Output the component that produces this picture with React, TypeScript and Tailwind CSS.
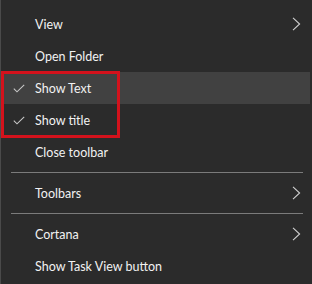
import React, { FC } from "react";

type Item = {
  label: string;
  checked?: boolean;
  submenu?: boolean;
  active?: boolean;
  separatorAfter?: boolean;
};

const items: Item[] = [
  { label: "View", submenu: true },
  { label: "Open Folder" },
  { label: "Show Text", checked: true, active: true },
  { label: "Show title", checked: true },
  { label: "Close toolbar", separatorAfter: true },
  { label: "Toolbars", submenu: true, separatorAfter: true },
  { label: "Cortana", submenu: true },
  { label: "Show Task View button" },
];

const Check: FC = () => (
  <svg width="12" height="9" viewBox="0 0 12 9" fill="none">
    <path d="M0.8 4.6 L4 7.8 L11.2 0.8" stroke="#c8c8c8" strokeWidth="1.1" />
  </svg>
);

const Chevron: FC = () => (
  <svg width="9" height="14" viewBox="0 0 9 14" fill="none">
    <path d="M1 0.8 L7.6 7 L1 13.2" stroke="#d0d0d0" strokeWidth="1.1" />
  </svg>
);

const App: FC = () => {
  return (
    <div
      className="relative w-[312px] h-[284px] overflow-hidden bg-[#2b2b2b] border-l border-[#4a4a4a] pt-2 text-[12.5px] text-[#f2f2f2]"
      style={{ fontFamily: 'Lato, "Noto Sans", sans-serif' }}
    >
      <ul>
        {items.map((item) => (
          <li key={item.label}>
            <div
              className={`flex h-8 items-center pr-[9px] mr-[2px] ${item.active ? "bg-[#414141]" : ""}`}
            >
              <div className="flex w-[34px] justify-center pl-[1px]">
                {item.checked && <Check />}
              </div>
              <span className="flex-1 pt-[2px] leading-none">{item.label}</span>
              {item.submenu && <Chevron />}
            </div>
            {item.separatorAfter && (
              <div className="my-[4px] ml-[10px] mr-[9px] h-px bg-[#7b7b7b]" />
            )}
          </li>
        ))}
      </ul>
      <div className="absolute left-0 top-[71px] h-[67px] w-[119px] border-[3px] border-[#d3121c]" />
    </div>
  );
};

export default App;
